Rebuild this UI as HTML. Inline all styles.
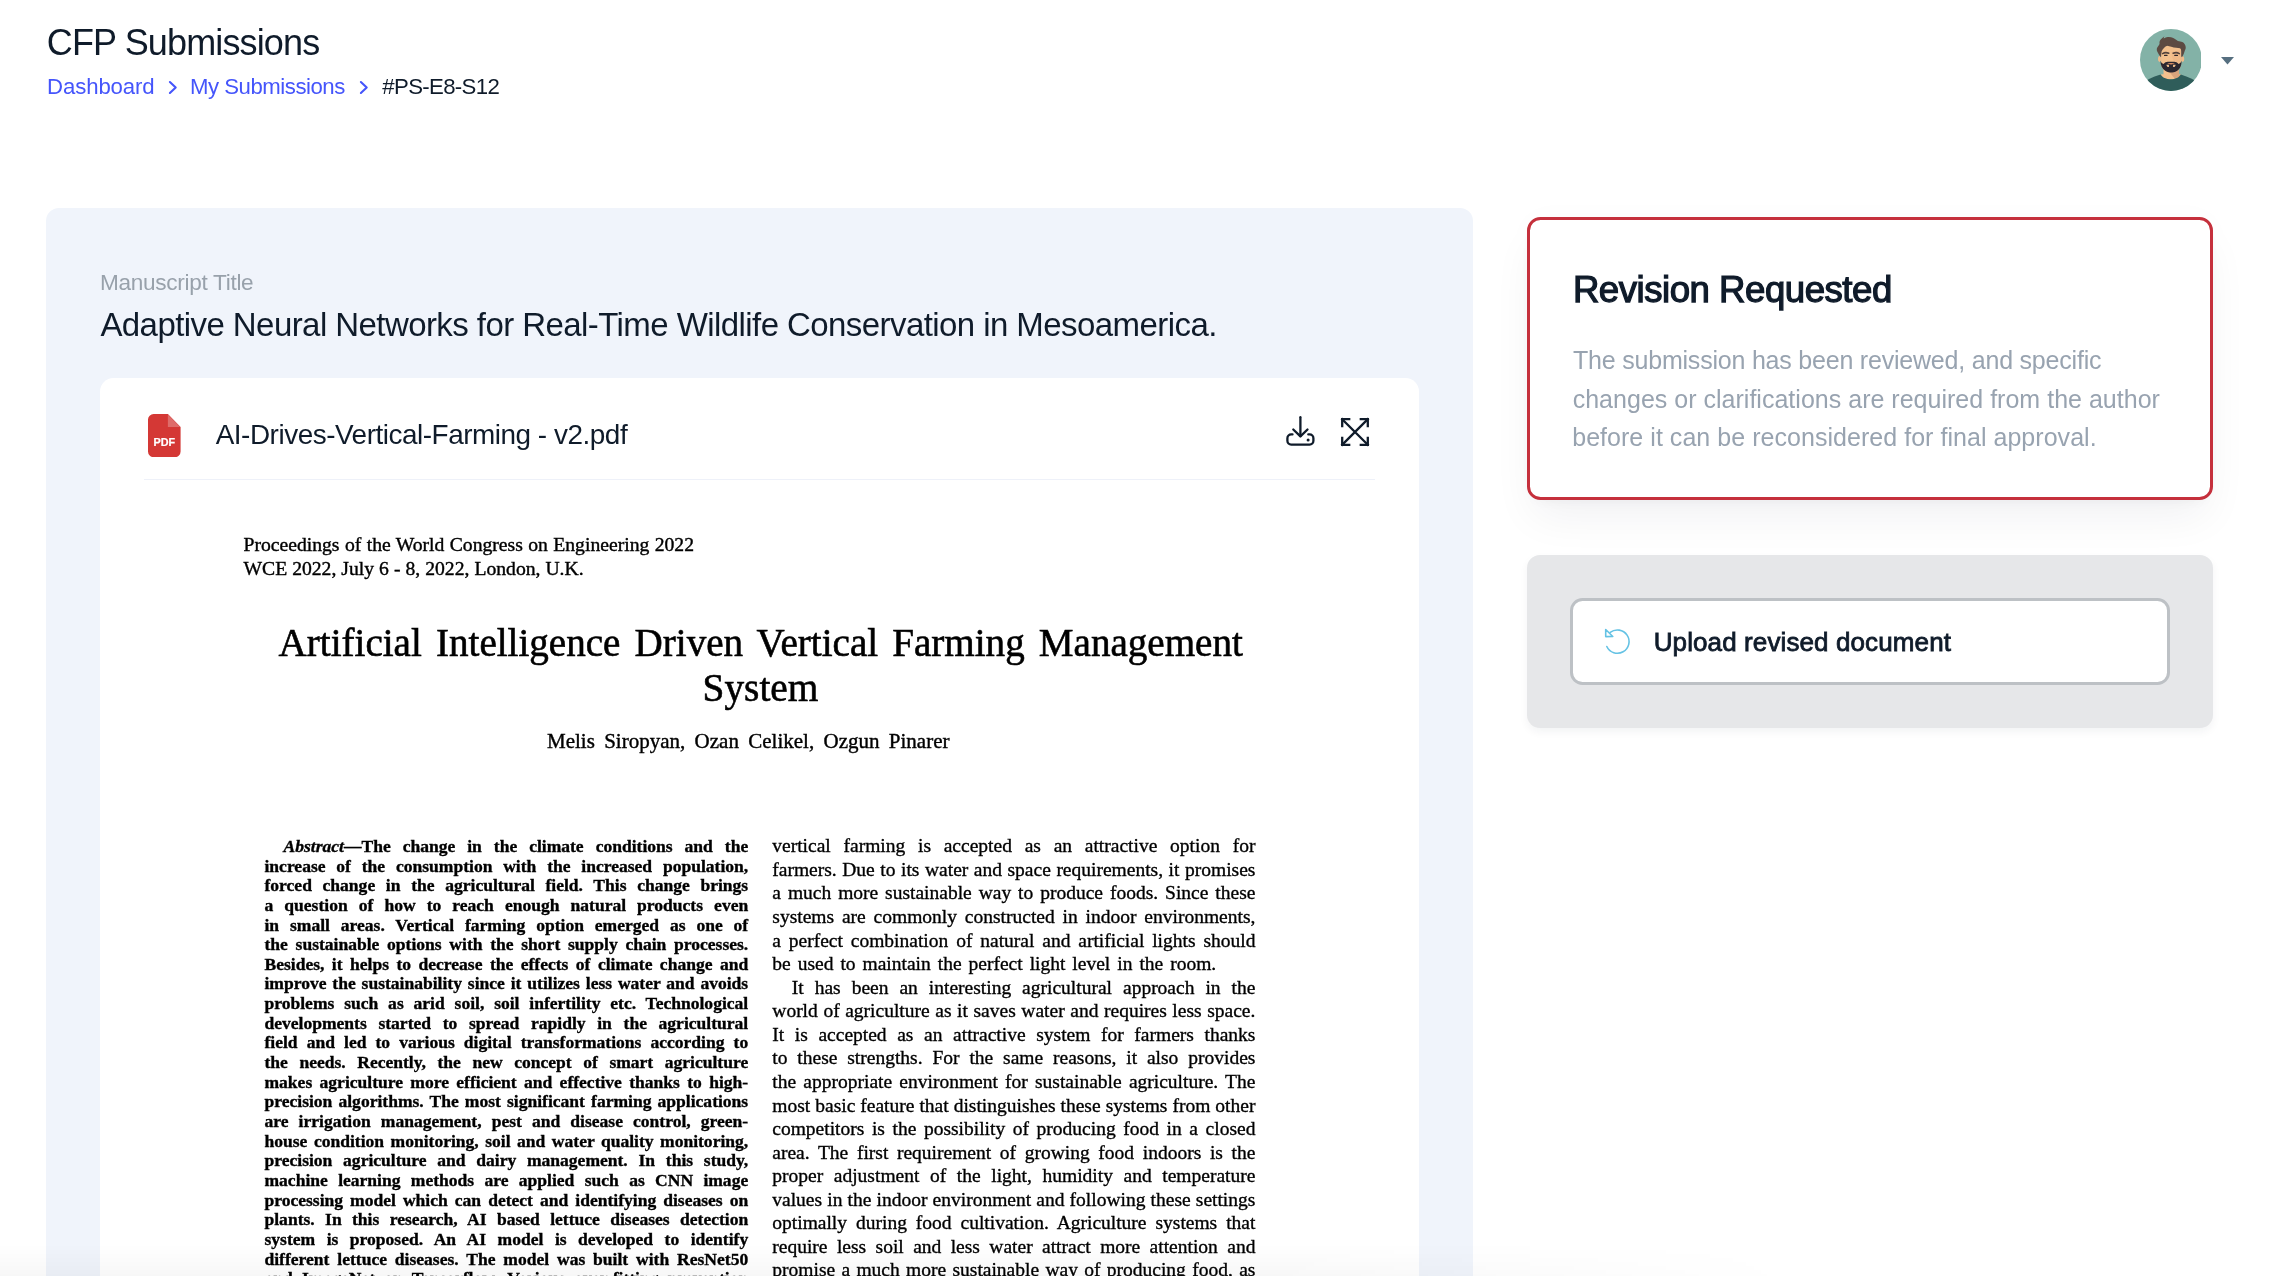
<!DOCTYPE html>
<html><head><meta charset="utf-8"><title>CFP Submissions</title>
<style>
html,body{margin:0;padding:0}
body{width:2282px;height:1276px;overflow:hidden;background:#fff;position:relative;font-family:"Liberation Sans",sans-serif}
#root{position:absolute;left:0;top:0;width:2282px;height:1276px;overflow:hidden;will-change:transform}
.a{position:absolute;display:block}
.t{position:absolute;white-space:nowrap;line-height:1}
.s{font-family:"Liberation Serif",serif;color:#000}
.j{position:absolute;white-space:nowrap;line-height:1;color:#000;-webkit-text-stroke:0.35px #000;font-family:"Liberation Serif",serif;text-align:justify;text-align-last:justify;overflow:visible}
.nj{text-align:left;text-align-last:left}
</style></head><body><div id="root">
<svg class="a" style="left:167px;top:79px" width="12" height="17" viewBox="0 0 12 17"><path d="M2.9 3.0 L8.7 8.5 L2.9 14.0" fill="none" stroke="#4555fb" stroke-width="2.1" stroke-linecap="round" stroke-linejoin="round"/></svg>
<svg class="a" style="left:358px;top:79px" width="12" height="17" viewBox="0 0 12 17"><path d="M2.9 3.0 L8.7 8.5 L2.9 14.0" fill="none" stroke="#4555fb" stroke-width="2.1" stroke-linecap="round" stroke-linejoin="round"/></svg>
<svg class="a" style="left:2139.6px;top:29.2px" width="61.9" height="61.9" viewBox="0 0 61.4 61.4">
<defs><clipPath id="av"><circle cx="30.7" cy="30.7" r="30.7"/></clipPath></defs>
<g clip-path="url(#av)">
<rect width="62" height="62" fill="#83b2a7"/>
<path d="M23.3 37 L38.7 37 L38.7 44.8 L40.5 45.2 C37.5 51.6 23.4 51.6 20.4 45.2 L23.3 44.8 Z" fill="#f3c08d"/>
<path d="M28.6 42 L38.7 40 L38.7 44.8 L40.5 45.2 C39.2 48 37.2 49.4 35.2 50 Z" fill="#d8a47c"/>
<path d="M-2 63 L-2 57 C3 52.6 11 47.6 20.5 45.1 C23.4 51.4 37.5 51.4 40.4 45.1 C49.5 47.6 58 52.6 63.5 57 L63.5 63 Z" fill="#2f5d5a"/>
<ellipse cx="19.4" cy="29.8" rx="1.6" ry="2.9" fill="#f0ba8a"/>
<ellipse cx="42.3" cy="29.8" rx="1.6" ry="2.9" fill="#f0ba8a"/>
<path d="M20.9 20 Q20.9 16.5 25 16.5 L37 16.5 Q40.9 16.5 40.9 20 L40.9 34 C40.9 40 36 43 30.9 43 C25.8 43 20.9 40 20.9 34 Z" fill="#f3c08d"/>
<path d="M31.2 22.5 L40.9 21 L40.9 33 L36 33.5 C33.5 32.5 31.8 30 31.2 22.5 Z" fill="#ecb585" opacity="0.75"/>
<path d="M20.3 31.7 C20.3 36 22 39.5 25 41.3 C27.5 42.9 29.5 43.1 30.8 43.1 C32.2 43.1 34.5 42.9 37 41.3 C40 39.5 41.3 36 41.3 31.7 C40.5 33.2 39.5 34.3 38.3 34.6 C37 33.3 35.5 32.6 34 32.5 L27.6 32.5 C26 32.6 24.5 33.3 23.4 34.6 C22 34.3 21 33.2 20.3 31.7 Z" fill="#2b2730"/>
<path d="M26.9 34.3 C29 33.5 32.6 33.5 34.7 34.3 C32.6 35.4 29 35.4 26.9 34.3 Z" fill="#e39468"/>
<path d="M26.2 35.5 L28.7 35.5 L28.7 37.7 C27.5 38.1 26.5 37.3 26.2 35.5 Z" fill="#f3c08d"/>
<path d="M32.8 35.5 L35.4 35.5 C35.1 37.3 34 38.1 32.8 37.7 Z" fill="#f3c08d"/>
<path d="M20.9 27.6 L20.2 27.6 C19 26 18 24 17.2 22.5 C16.2 20.5 16.6 18.5 18 17 C18.6 16 19.2 15.4 19.4 14.8 C19.2 13.2 19.4 12 20 11.2 C21 9.6 22.6 8.2 24.3 7.1 C23.7 8 23.4 8.8 23.5 9.5 C24.8 8.6 26.2 8.1 27.5 8 C29.5 7.8 31.4 8.2 33 9 C34.8 9.9 36.2 11.2 37.6 12 C39.2 12.4 40.8 12.4 42 13 C43.8 14 45 15.6 45.3 17.5 C45.5 18.8 45.2 20 44.6 21 C44 23.4 43 25.6 42 27.6 L40.9 27.6 L40.9 22 C40.8 20.6 40.4 19.7 39.7 19.2 C38.5 18.7 37.3 18.6 36 18.5 C34.3 18.5 32.6 18.2 31 17.6 C29.6 17.2 28.3 16.7 27 16.5 C25.8 16.9 24.8 17.6 24 18.5 C22.8 19.5 22 20.7 21.5 22 C21.1 23.8 20.9 25.6 20.9 27.6 Z" fill="#5c4a42"/>
<path d="M22.4 24.4 C24 23.4 27 23.4 28.6 24.1" stroke="#54433c" stroke-width="1.5" fill="none" stroke-linecap="round"/>
<path d="M32.8 24.1 C34.4 23.4 37.4 23.4 39 24.4" stroke="#54433c" stroke-width="1.5" fill="none" stroke-linecap="round"/>
<path d="M24.4 26.2 L26.8 26.2 M34.5 26.2 L37.1 26.2" stroke="#33282a" stroke-width="1.25" fill="none" stroke-linecap="round"/>
</g></svg>
<svg class="a" style="left:2220px;top:56px" width="15" height="9" viewBox="0 0 15 9"><path d="M1 1 L14 1 L7.5 8.4 Z" fill="#566f80"/></svg>
<div class="a" style="left:46px;top:208px;width:1427px;height:1100px;background:#f0f4fb;border-radius:13px"></div>
<div class="a" style="left:100px;top:378px;width:1319px;height:950px;background:#fff;border-radius:13.5px"></div>
<svg class="a" style="left:148.2px;top:413.8px" width="32.6" height="43.2" viewBox="0 0 32.6 43.2">
<path d="M5.6 0 H19.9 L32.6 12.9 V37.6 a5.6 5.6 0 0 1 -5.6 5.6 H5.6 a5.6 5.6 0 0 1 -5.6 -5.6 V5.6 a5.6 5.6 0 0 1 5.6 -5.6 Z" fill="#d43835"/>
<path d="M19.9 0.4 L32.2 12.9 H19.9 Z" fill="#de6c6a"/>
<text x="16.4" y="32.1" font-family="Liberation Sans, sans-serif" font-weight="700" font-size="10.8" fill="#fff" stroke="#fff" stroke-width="0.25" text-anchor="middle">PDF</text>
</svg>
<svg class="a" style="left:1284px;top:414px" width="33" height="34" viewBox="0 0 33 34">
<g fill="none" stroke="#0f1b2a" stroke-width="2.3" stroke-linecap="round" stroke-linejoin="round">
<path d="M16.4 3.2 V22.2"/><path d="M9.3 15.5 L16.4 22.4 L23.5 15.5"/>
<path d="M8.5 20.4 H7.2 a3.8 3.8 0 0 0 -3.8 3.8 V26.8 a3.8 3.8 0 0 0 3.8 3.8 H25.6 a3.8 3.8 0 0 0 3.8 -3.8 V24.2 a3.8 3.8 0 0 0 -3.8 -3.8 H24.3"/>
</g><circle cx="24.1" cy="26" r="1.5" fill="#0f1b2a"/></svg>
<svg class="a" style="left:1339px;top:416px" width="32" height="32" viewBox="0 0 32 32">
<g fill="none" stroke="#0f1b2a" stroke-width="2.3" stroke-linecap="square" stroke-linejoin="miter">
<path d="M3.2 3.2 L28.8 28.8 M28.8 3.2 L3.2 28.8"/>
<path d="M3.2 10.2 V3.2 H10.2 M21.8 3.2 H28.8 V10.2 M28.8 21.8 V28.8 H21.8 M10.2 28.8 H3.2 V21.8"/>
</g></svg>
<div class="a" style="left:143.5px;top:479px;width:1231.5px;height:1.4px;background:#eef1f9"></div>
<div class="a" style="left:0;top:0;width:1419px;height:1276px;filter:blur(0.35px)">
<div class="t s" style="left:243.50px;top:535.14px;font-size:19.65px;word-spacing:0.5px;-webkit-text-stroke:0.4px #000">Proceedings of the World Congress on Engineering 2022</div>
<div class="t s" style="left:243.50px;top:558.94px;font-size:19.65px;word-spacing:0.1px;-webkit-text-stroke:0.4px #000">WCE 2022, July 6 - 8, 2022, London, U.K.</div>
<div class="t s" style="left:278.60px;top:622.75px;font-size:39.1px;word-spacing:4.4px;-webkit-text-stroke:0.6px #000">Artificial Intelligence Driven Vertical Farming Management</div>
<div class="t s" style="left:702.60px;top:668.79px;font-size:39.3px;word-spacing:0px;-webkit-text-stroke:0.6px #000">System</div>
<div class="t s" style="left:547.00px;top:730.81px;font-size:21.0px;word-spacing:4.1px;-webkit-text-stroke:0.4px #000">Melis Siropyan, Ozan Celikel, Ozgun Pinarer</div>
<div class="j" style="left:264.5px;top:837.90px;width:483.7px;font-size:17.55px;font-weight:700"><span style="display:inline-block;width:19px"></span><i>Abstract</i>—The change in the climate conditions and the</div>
<div class="j" style="left:264.5px;top:857.55px;width:483.7px;font-size:17.55px;font-weight:700">increase of the consumption with the increased population,</div>
<div class="j" style="left:264.5px;top:877.20px;width:483.7px;font-size:17.55px;font-weight:700">forced change in the agricultural field. This change brings</div>
<div class="j" style="left:264.5px;top:896.85px;width:483.7px;font-size:17.55px;font-weight:700">a question of how to reach enough natural products even</div>
<div class="j" style="left:264.5px;top:916.50px;width:483.7px;font-size:17.55px;font-weight:700">in small areas. Vertical farming option emerged as one of</div>
<div class="j" style="left:264.5px;top:936.15px;width:483.7px;font-size:17.55px;font-weight:700">the sustainable options with the short supply chain processes.</div>
<div class="j" style="left:264.5px;top:955.80px;width:483.7px;font-size:17.55px;font-weight:700">Besides, it helps to decrease the effects of climate change and</div>
<div class="j" style="left:264.5px;top:975.45px;width:483.7px;font-size:17.55px;font-weight:700">improve the sustainability since it utilizes less water and avoids</div>
<div class="j" style="left:264.5px;top:995.10px;width:483.7px;font-size:17.55px;font-weight:700">problems such as arid soil, soil infertility etc. Technological</div>
<div class="j" style="left:264.5px;top:1014.75px;width:483.7px;font-size:17.55px;font-weight:700">developments started to spread rapidly in the agricultural</div>
<div class="j" style="left:264.5px;top:1034.40px;width:483.7px;font-size:17.55px;font-weight:700">field and led to various digital transformations according to</div>
<div class="j" style="left:264.5px;top:1054.05px;width:483.7px;font-size:17.55px;font-weight:700">the needs. Recently, the new concept of smart agriculture</div>
<div class="j" style="left:264.5px;top:1073.70px;width:483.7px;font-size:17.55px;font-weight:700">makes agriculture more efficient and effective thanks to high-</div>
<div class="j" style="left:264.5px;top:1093.35px;width:483.7px;font-size:17.55px;font-weight:700">precision algorithms. The most significant farming applications</div>
<div class="j" style="left:264.5px;top:1113.00px;width:483.7px;font-size:17.55px;font-weight:700">are irrigation management, pest and disease control, green-</div>
<div class="j" style="left:264.5px;top:1132.65px;width:483.7px;font-size:17.55px;font-weight:700">house condition monitoring, soil and water quality monitoring,</div>
<div class="j" style="left:264.5px;top:1152.30px;width:483.7px;font-size:17.55px;font-weight:700">precision agriculture and dairy management. In this study,</div>
<div class="j" style="left:264.5px;top:1171.95px;width:483.7px;font-size:17.55px;font-weight:700">machine learning methods are applied such as CNN image</div>
<div class="j" style="left:264.5px;top:1191.60px;width:483.7px;font-size:17.55px;font-weight:700">processing model which can detect and identifying diseases on</div>
<div class="j" style="left:264.5px;top:1211.25px;width:483.7px;font-size:17.55px;font-weight:700">plants. In this research, AI based lettuce diseases detection</div>
<div class="j" style="left:264.5px;top:1230.90px;width:483.7px;font-size:17.55px;font-weight:700">system is proposed. An AI model is developed to identify</div>
<div class="j" style="left:264.5px;top:1250.55px;width:483.7px;font-size:17.55px;font-weight:700">different lettuce diseases. The model was built with ResNet50</div>
<div class="j" style="left:264.5px;top:1270.20px;width:483.7px;font-size:17.55px;font-weight:700">and ImageNet on Tensorflow. Various over-fitting prevention</div>
<div class="j" style="left:772.3px;top:836.37px;width:483.1px;font-size:19.5px">vertical farming is accepted as an attractive option for</div>
<div class="j" style="left:772.3px;top:859.93px;width:483.1px;font-size:19.5px">farmers. Due to its water and space requirements, it promises</div>
<div class="j" style="left:772.3px;top:883.49px;width:483.1px;font-size:19.5px">a much more sustainable way to produce foods. Since these</div>
<div class="j" style="left:772.3px;top:907.05px;width:483.1px;font-size:19.5px">systems are commonly constructed in indoor environments,</div>
<div class="j" style="left:772.3px;top:930.61px;width:483.1px;font-size:19.5px">a perfect combination of natural and artificial lights should</div>
<div class="j nj" style="left:772.3px;top:954.17px;width:483.1px;font-size:19.5px"><span style="word-spacing:2.1px">be used to maintain the perfect light level in the room.</span></div>
<div class="j" style="left:772.3px;top:977.73px;width:483.1px;font-size:19.5px"><span style="display:inline-block;width:19.5px"></span>It has been an interesting agricultural approach in the</div>
<div class="j" style="left:772.3px;top:1001.29px;width:483.1px;font-size:19.5px">world of agriculture as it saves water and requires less space.</div>
<div class="j" style="left:772.3px;top:1024.85px;width:483.1px;font-size:19.5px">It is accepted as an attractive system for farmers thanks</div>
<div class="j" style="left:772.3px;top:1048.41px;width:483.1px;font-size:19.5px">to these strengths. For the same reasons, it also provides</div>
<div class="j" style="left:772.3px;top:1071.97px;width:483.1px;font-size:19.5px">the appropriate environment for sustainable agriculture. The</div>
<div class="j" style="left:772.3px;top:1095.53px;width:483.1px;font-size:19.5px">most basic feature that distinguishes these systems from other</div>
<div class="j" style="left:772.3px;top:1119.09px;width:483.1px;font-size:19.5px">competitors is the possibility of producing food in a closed</div>
<div class="j" style="left:772.3px;top:1142.65px;width:483.1px;font-size:19.5px">area. The first requirement of growing food indoors is the</div>
<div class="j" style="left:772.3px;top:1166.21px;width:483.1px;font-size:19.5px">proper adjustment of the light, humidity and temperature</div>
<div class="j" style="left:772.3px;top:1189.77px;width:483.1px;font-size:19.5px">values in the indoor environment and following these settings</div>
<div class="j" style="left:772.3px;top:1213.33px;width:483.1px;font-size:19.5px">optimally during food cultivation. Agriculture systems that</div>
<div class="j" style="left:772.3px;top:1236.89px;width:483.1px;font-size:19.5px">require less soil and less water attract more attention and</div>
<div class="j" style="left:772.3px;top:1260.45px;width:483.1px;font-size:19.5px">promise a much more sustainable way of producing food, as</div>
</div>
<div class="a" style="left:1527px;top:217px;width:686px;height:283px;box-sizing:border-box;border:3px solid #c5303c;border-radius:13.5px;background:#fff;box-shadow:0 22px 44px -6px rgba(15,25,45,0.06),0 6px 16px -4px rgba(15,25,45,0.04),0 0 30px rgba(15,25,45,0.02)"></div>
<div class="a" style="left:1527px;top:555px;width:686px;height:173px;border-radius:13px;background:#e6e7e9;box-shadow:0 4px 8px rgba(20,30,50,0.05)"></div>
<div class="a" style="left:1570px;top:598px;width:600px;height:87px;box-sizing:border-box;border:3px solid #bdc1c5;border-radius:12.5px;background:#fff"></div>
<svg class="a" style="left:1600px;top:624px" width="36" height="36" viewBox="1600 624 36 36">
<g fill="none" stroke="#64c2e4" stroke-width="1.6" stroke-linecap="round" stroke-linejoin="round">
<path d="M1610.17 632.47 A11.65 11.65 0 1 1 1606.81 646.46"/>
<path d="M1605.7 629.5 L1605.7 636.6 L1612.8 636.5 Z"/>
</g></svg>
<div class="t" style="left:46.8px;top:25.3px;font-size:36.0px;color:#0f1b2a;letter-spacing:-0.863px;font-weight:400">CFP Submissions</div>
<div class="t" style="left:47.1px;top:75.5px;font-size:22.2px;color:#4555fb;letter-spacing:-0.125px;font-weight:400">Dashboard</div>
<div class="t" style="left:189.9px;top:75.5px;font-size:22.2px;color:#4555fb;letter-spacing:-0.469px;font-weight:400">My Submissions</div>
<div class="t" style="left:382.3px;top:75.5px;font-size:22.2px;color:#0f1b2a;letter-spacing:-0.65px;font-weight:400">#PS-E8-S12</div>
<div class="t" style="left:100.0px;top:271.7px;font-size:22.6px;color:#98a1ab;letter-spacing:-0.303px;font-weight:400">Manuscript Title</div>
<div class="t" style="left:100.4px;top:308.3px;font-size:33.0px;color:#0f1b2a;letter-spacing:-0.57px;font-weight:400">Adaptive Neural Networks for Real-Time Wildlife Conservation in Mesoamerica.</div>
<div class="t" style="left:215.7px;top:420.7px;font-size:27.9px;color:#0f1b2a;letter-spacing:-0.465px;font-weight:400">AI-Drives-Vertical-Farming - v2.pdf</div>
<div class="t" style="left:1572.9px;top:272.0px;font-size:36.6px;color:#0f1b2a;letter-spacing:-0.471px;font-weight:400;-webkit-text-stroke:1.25px #0f1b2a">Revision Requested</div>
<div class="t" style="left:1573.0px;top:348.3px;font-size:25.0px;color:#98a3b0;letter-spacing:-0.207px;font-weight:400">The submission has been reviewed, and specific</div>
<div class="t" style="left:1572.7px;top:386.6px;font-size:25.0px;color:#98a3b0;letter-spacing:0.015px;font-weight:400">changes or clarifications are required from the author</div>
<div class="t" style="left:1572.2px;top:425.4px;font-size:25.0px;color:#98a3b0;letter-spacing:0.04px;font-weight:400">before it can be reconsidered for final approval.</div>
<div class="t" style="left:1653.7px;top:629.0px;font-size:26.0px;color:#0f1b2a;letter-spacing:0.109px;font-weight:400;-webkit-text-stroke:0.8px #0f1b2a">Upload revised document</div>
<div class="a" style="left:0;top:1244px;width:1800px;height:32px;background:linear-gradient(to bottom,rgba(0,0,0,0),rgba(0,0,0,0.03));-webkit-mask-image:linear-gradient(to right,#000 70%,transparent);mask-image:linear-gradient(to right,#000 70%,transparent)"></div>
</div></body></html>
